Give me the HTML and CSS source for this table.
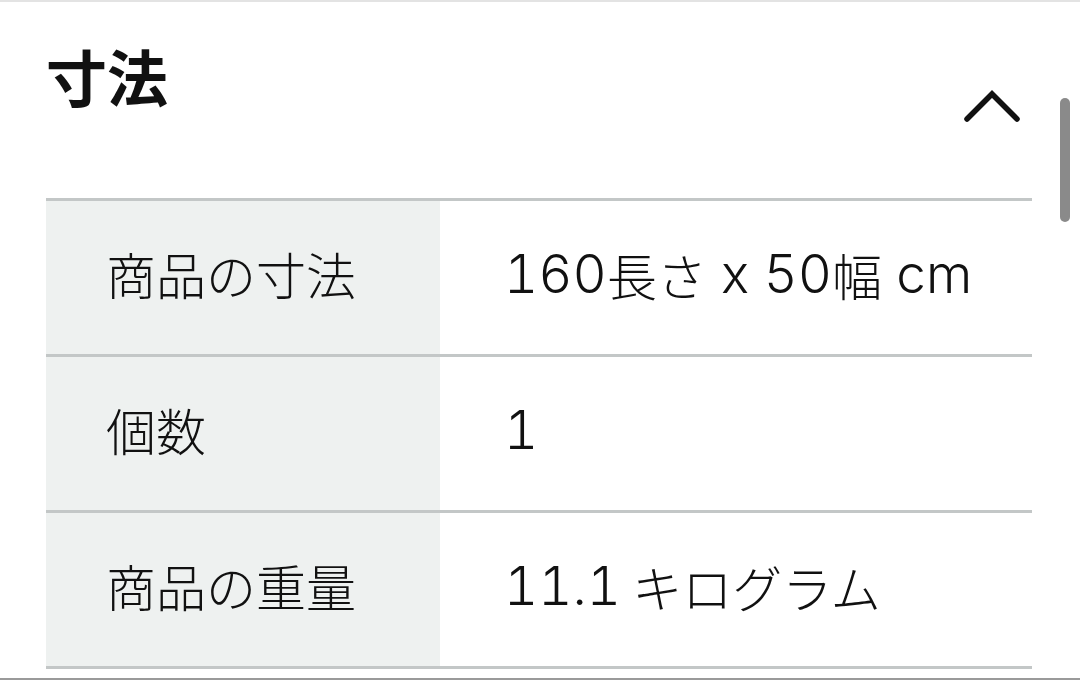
FILE: index.html
```html
<!DOCTYPE html>
<html lang="ja">
<head>
<meta charset="utf-8">
<title>寸法</title>
<link rel="stylesheet" href="styles.css">
</head>
<body>
<div class="page">
  <section class="section">
    <div class="header">
      <h2 class="title">寸法</h2>
      <svg class="chevron" width="58" height="36" viewBox="0 0 58 36">
        <path d="M4 31 L29 6 L54 31" fill="none" stroke="#111" stroke-width="5.5" stroke-linecap="round" stroke-linejoin="miter"/>
      </svg>
    </div>
    <div class="table">
      <div class="row">
        <div class="label">商品の寸法</div>
        <div class="value"><span class="lat">160</span>長さ<span class="lat"> x 50</span>幅<span class="lat"> cm</span></div>
      </div>
      <div class="row">
        <div class="label">個数</div>
        <div class="value"><span class="lat">1</span></div>
      </div>
      <div class="row">
        <div class="label">商品の重量</div>
        <div class="value"><span class="lat">11.1</span> キログラム</div>
      </div>
    </div>
  </section>
  <div class="scrollbar"></div>
</div>
</body>
</html>
```
FILE: styles.css
```css
html, body {
  margin: 0;
  padding: 0;
  background: #fff;
}
body {
  font-family: "Noto Sans CJK JP", "Noto Sans", sans-serif;
  color: #111;
}
.page {
  position: relative;
  height: 680px;
  box-sizing: border-box;
  border-top: 2px solid #e3e3e3;
  border-bottom: 2px solid #9a9a9a;
  overflow: hidden;
}
.section {
  padding: 0 48px 0 46px;
}
.header {
  height: 196px;
  display: flex;
  justify-content: space-between;
  align-items: flex-start;
}
.title {
  margin: 0;
  padding-top: 43px;
  font-size: 61px;
  line-height: 1;
  font-weight: 700;
  letter-spacing: 0;
}
.chevron {
  margin-top: 86px;
  margin-right: 11px;
}
.table {
  border-top: 3px solid #c3c7c7;
}
.row {
  display: flex;
  height: 153px;
  border-bottom: 3px solid #c3c7c7;
}
.label {
  padding-left: 60px;
  padding-bottom: 10px;
  box-sizing: border-box;
  flex: 0 0 394px;
  background: #eef1f0;
  display: flex;
  align-items: center;
  font-size: 50px;
  font-weight: 300;
}
.value {
  flex: 1;
  padding-left: 64px;
  padding-bottom: 8px;
  display: flex;
  align-items: center;
  white-space: pre;
  font-size: 50px;
  font-weight: 300;
}
.lat {
  font-family: "Inter", "Noto Sans", sans-serif;
  font-size: 53px;
  font-weight: 300;
  font-variant-numeric: tabular-nums;
}
.scrollbar {
  position: absolute;
  left: 1060px;
  top: 96px;
  width: 10px;
  height: 124px;
  border-radius: 5px;
  background: #8a8a8a;
}
```
